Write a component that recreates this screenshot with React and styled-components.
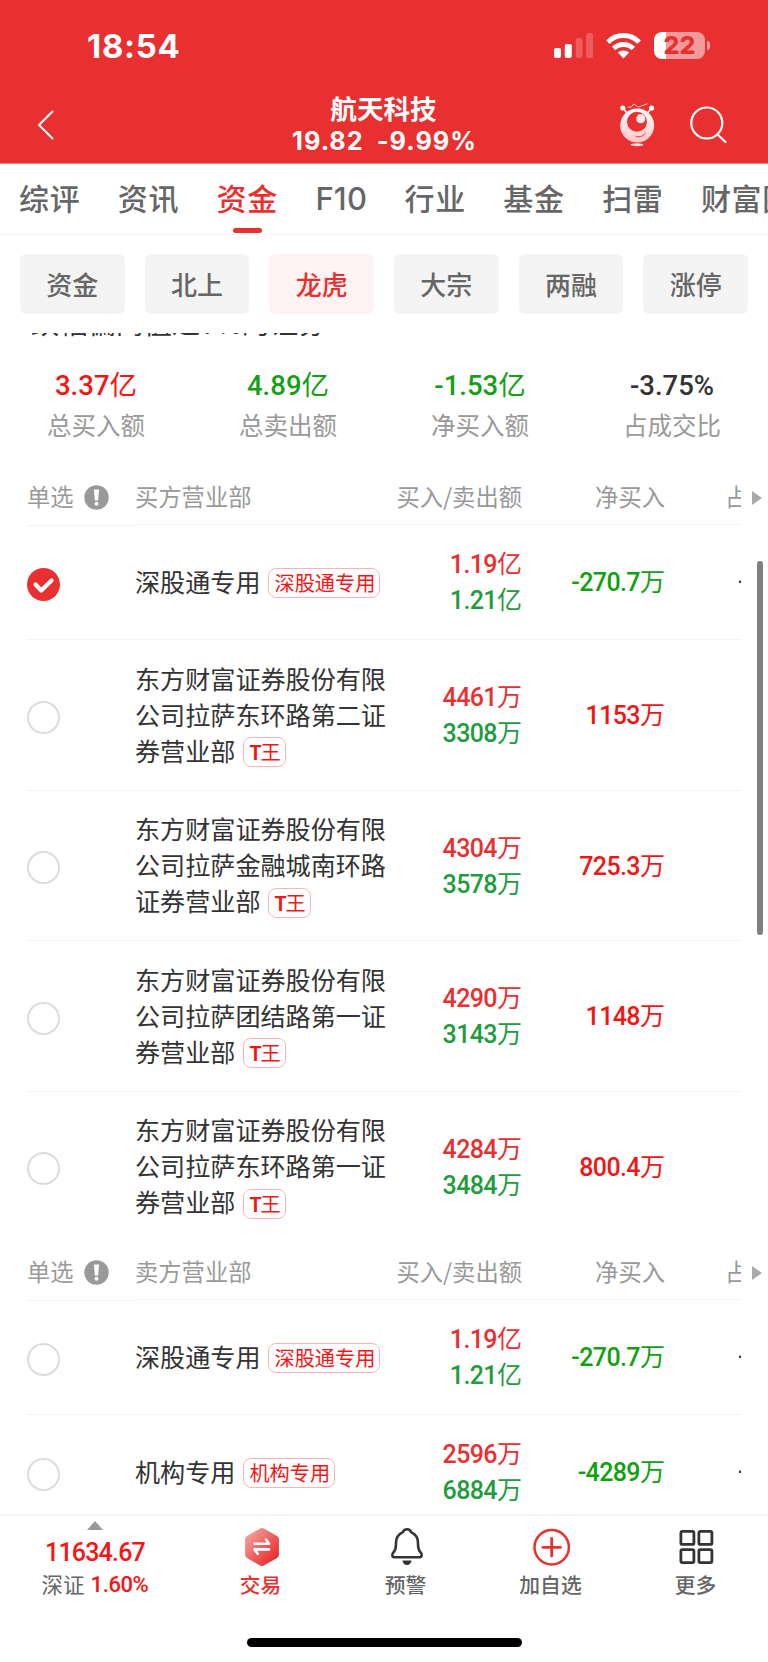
import React from "react";
import styled, { createGlobalStyle } from "styled-components";

const CJK = '"Noto Sans CJK SC", sans-serif';
const NUM = 'Roboto, "Noto Sans CJK SC", sans-serif';
const RED = "#e93030";

const GlobalStyle = createGlobalStyle`
  * { box-sizing: border-box; }
  body { margin: 0; background: #fff; font-family: ${CJK}; color: #333; }
`;

const Screen = styled.div`
  width: 768px;
  height: 1662px;
  display: flex;
  flex-direction: column;
  overflow: hidden;
  background: #fff;
`;

const Header = styled.header`
  flex: none;
  background: ${RED};
  color: #fff;
  border-bottom: 1px solid #f08080;
  height: 164px;
`;

const StatusBar = styled.div`
  height: 92px;
  padding: 0 58px 1px 87px;
  display: flex;
  align-items: center;
  justify-content: space-between;
`;

const Clock = styled.div`
  font: 700 33px/40px Inter, sans-serif;
  letter-spacing: 0.7px;
  padding-top: 1px;
`;

const StatusIcons = styled.div`
  display: flex;
  align-items: center;
  svg { display: block; }
`;

const Battery = styled.div`
  width: 51px;
  height: 27px;
  border-radius: 8px;
  margin-left: 13px;
  background: linear-gradient(to right, #fff 11.5px, #f59a9a 11.5px);
  color: ${RED};
  font: 800 25px/27px Inter, sans-serif;
  text-align: center;
`;

const BatteryTip = styled.div`
  width: 3px;
  height: 9px;
  margin-left: 2px;
  border-radius: 0 4px 4px 0;
  background: #f59a9a;
`;

const NavBar = styled.div`
  height: 64px;
  padding: 0 41px 0 37px;
  display: grid;
  grid-template-columns: 107px 1fr 107px;
  align-items: center;
  svg { display: block; }
`;

const Title = styled.div`
  text-align: center;
  font: 700 26.6px/32px ${CJK};
`;

const Quote = styled.div`
  text-align: center;
  font: 700 25.3px/32px Inter, sans-serif;
  letter-spacing: 1px;
  word-spacing: 6px;
  white-space: nowrap;
  padding: 1px 0 0 2px;
`;

const TitleBlock = styled.div`
  padding-left: 3px;
`;

const NavActions = styled.div`
  display: flex;
  justify-content: space-between;
  align-items: center;
`;

const Tabs = styled.nav`
  height: 71px;
  flex: none;
  display: flex;
  gap: 37.4px;
  padding-left: 19px;
  border-bottom: 1px solid #f4f4f4;
  overflow: hidden;
`;

const Tab = styled.div`
  flex: none;
  display: flex;
  flex-direction: column;
  align-items: center;
  justify-content: space-between;
  padding-top: ${(p) => (p.$latin ? 13 : 11)}px;
  font: ${(p) => (p.$latin ? "500 31px/44px Inter" : "500 30px/44px " + CJK)};
  letter-spacing: ${(p) => (p.$latin ? 0.2 : 0.7)}px;
  color: ${(p) => (p.$active ? RED : "#666")};
`;

const TabMark = styled.span`
  width: 29px;
  height: 5px;
  border-radius: 3px;
  margin-bottom: 1px;
  background: ${(p) => (p.$active ? RED : "transparent")};
`;

const Chips = styled.div`
  flex: none;
  height: 98px;
  padding: 19px 20px 19px;
  display: grid;
  grid-template-columns: repeat(6, 1fr);
  gap: 20px;
`;

const Chip = styled.div`
  height: 60px;
  border-radius: 6px;
  text-align: center;
  font: 500 26px/59px ${CJK};
  color: ${(p) => (p.$active ? RED : "#666")};
  background: ${(p) => (p.$active ? "#fff2f2" : "#f4f4f4")};
`;

const Scroll = styled.main`
  position: relative;
  flex: none;
  height: 1181px;
  overflow: hidden;
`;

const Reason = styled.p`
  margin: -31px 0 0;
  padding-left: 31px;
  height: 45px;
  font: 400 28.2px/40px ${CJK};
`;

const Stats = styled.div`
  display: grid;
  grid-template-columns: repeat(4, 192px);
  height: 120px;
  padding-top: 19px;
  text-align: center;
`;

const StatValue = styled.div`
  font: 500 27.5px/40px ${NUM};
  color: ${(p) => p.$color};
`;

const StatLabel = styled.div`
  font: 400 24.5px/36px ${CJK};
  margin-top: 1px;
  color: #999;
`;

const Unit = styled.span`
  font-weight: 400;
  letter-spacing: 0;
`;

const HeadRow = styled.div`
  position: relative;
  display: grid;
  grid-template-columns: 108px 251px 136px 143px 76px;
  width: 741px;
  padding-left: 27px;
  height: 58px;
  font: 400 23.3px/58px ${CJK};
  color: #999;
`;

const HeadCell = styled.div`
  display: flex;
  align-items: center;
  height: 58px;
  justify-content: ${(p) => (p.$end ? "flex-end" : "flex-start")};
  border-bottom: 1px solid #f3f3f3;
  white-space: nowrap;
  overflow: hidden;
  svg { flex: none; }
`;

const SelectHead = styled(HeadCell)`
  height: 59px;
  gap: 10px;
  padding-bottom: 1px;
`;

const LastHead = styled(HeadCell)`
  padding-left: 60px;
`;

const MoreArrow = styled.span`
  position: absolute;
  right: -21px;
  top: 24px;
  border: 7px solid transparent;
  border-left: 10px solid #aaa;
  border-right: 0;
`;

const Row = styled.div`
  display: grid;
  grid-template-columns: 108px 251px 136px 143px 76px;
  align-items: center;
  width: 714px;
  margin-left: 27px;
  height: ${(p) => p.$height}px;
  border-bottom: 1px solid ${(p) => (p.$last ? "transparent" : "#f3f3f3")};
  overflow: hidden;
`;

const Radio = styled.span`
  display: flex;
  align-items: center;
  justify-content: center;
  width: 33px;
  height: 33px;
  margin-top: 4px;
  border-radius: 50%;
  border: ${(p) => (p.$on ? "0" : "2px solid #dcdcdc")};
  background: ${(p) => (p.$on ? RED : "#fff")};
`;

const Name = styled.div`
  font: 400 25.1px/36px ${CJK};
  color: #333;
  white-space: nowrap;
  margin-bottom: 3px;
`;

const Line = styled.div`
  display: flex;
  align-items: center;
  height: 36px;
`;

const Tag = styled.span`
  height: 30px;
  margin-left: 8px;
  margin-top: 5px;
  padding: 0 4px 0 5px;
  border: 1px solid #ffb4b4;
  border-radius: 8px;
  font: 400 20.2px/27px ${CJK};
  color: #f71414;
`;

const TagLatin = styled.b`
  font: 700 19.5px/27px Roboto, sans-serif;
  letter-spacing: -1px;
`;

const Amounts = styled.div`
  text-align: right;
  font: 500 25px/36px ${NUM};
  letter-spacing: -0.6px;
  padding-top: 2px;
`;

const Amount = styled.div`
  color: ${(p) => (p.$buy ? RED : "#1f9c3d")};
`;

const Net = styled.div`
  text-align: right;
  font: 500 25px/36px ${NUM};
  letter-spacing: -0.6px;
  padding-top: 2px;
  color: ${(p) => (p.$down ? "#11a011" : "#f51414")};
`;

const Ratio = styled.div`
  padding-left: 73px;
  white-space: nowrap;
  font: 500 25px/36px ${NUM};
  color: #333;
`;

const ScrollThumb = styled.div`
  position: absolute;
  top: 228px;
  right: 5px;
  width: 6px;
  height: 374px;
  border-radius: 3px;
  background: #808080;
`;

const BottomBar = styled.footer`
  flex: none;
  height: 112px;
  display: grid;
  grid-template-columns: 188px repeat(4, 145px);
  border-top: 2px solid #f5f5f5;
`;

const IndexCell = styled.div`
  display: flex;
  flex-direction: column;
  align-items: center;
  padding: 5px 0 0 2px;
`;

const UpArrow = styled.span`
  border: 8px solid transparent;
  border-bottom: 9px solid #999;
  border-top: 0;
`;

const IndexValue = styled.div`
  font: 500 25px/32px ${NUM};
  letter-spacing: -0.8px;
  color: #f71414;
  margin-top: 7px;
`;

const IndexChange = styled.div`
  display: flex;
  align-items: center;
  gap: 6px;
  height: 32px;
  margin-top: -1px;
  font: 400 21.5px/32px ${CJK};
  color: #666;
  span { font: 500 22px/32px ${NUM}; letter-spacing: -0.4px; color: #f71414; padding-top: 1px; }
`;

const Action = styled.div`
  display: flex;
  flex-direction: column;
  align-items: center;
  padding-top: 11px;
  font: 500 20.8px/30px ${CJK};
  color: ${(p) => (p.$active ? RED : "#666")};
  svg { display: block; margin-bottom: 2px; }
`;

const HomeArea = styled.div`
  flex: none;
  height: 36px;
  padding-top: 12px;
`;

const HomeIndicator = styled.div`
  width: 275px;
  height: 9px;
  margin: 0 auto;
  border-radius: 5px;
  background: #000;
`;

const Signal = () => (
  <svg width="40" height="26" viewBox="0 0 40 26" fill="#fff">
    <rect x="0" y="15" width="7" height="10" rx="2" />
    <rect x="10.800" y="11" width="7" height="14" rx="2" />
    <rect x="21.800" y="5" width="6.600" height="20" rx="2" opacity=".22" />
    <rect x="32.200" y="0" width="6.800" height="25" rx="2" opacity=".22" />
  </svg>
);

const WifiIcon = styled.svg`
  margin-left: 12px;
`;

const Wifi = () => (
  <WifiIcon width="35" height="26" viewBox="0 0 35 26">
    <g fill="none" stroke="#fff" strokeWidth="5">
      <path d="M1.900 9.200C10.500 .4 24.500 .4 33.100 9.200" />
      <path d="M7.700 15.500C13.200 10.200 21.800 10.200 27.300 15.500" />
    </g>
    <path d="M17.500 25.500 11.800 19.600C15 16.700 20 16.700 23.200 19.600Z" fill="#fff" />
  </WifiIcon>
);

const Back = () => (
  <svg width="17" height="30" viewBox="0 0 17 30">
    <path d="M15.500 1.500 2 15 15.500 28.500" fill="none" stroke="#fff" strokeWidth="2" strokeLinecap="round" strokeLinejoin="round" />
  </svg>
);

const Mascot = () => (
  <svg width="36" height="44" viewBox="0 0 36 44">
    <defs>
      <linearGradient id="body" x1="0" y1="0" x2="0" y2="1">
        <stop offset="0" stopColor="#fff" />
        <stop offset="1" stopColor="#ffc4c4" />
      </linearGradient>
    </defs>
    <path d="m3 5 3.800 5M31.500 5l-3.800 5" stroke="#fff" strokeWidth="1.300" />
    <circle cx="2.900" cy="5" r="2.600" fill="#fff" />
    <circle cx="31.500" cy="5" r="2.600" fill="#fff" />
    <path d="M8 4.200 11.500 4 13.500 1l5 3 9-3.200" fill="none" stroke="#ffdada" strokeWidth=".9" />
    <circle cx="17.200" cy="22.500" r="17" fill="url(#body)" />
    <circle cx="17" cy="18.700" r="10" fill={RED} />
    <circle cx="20.800" cy="15.700" r="4.600" fill="#ffe9e9" />
    <path d="M16.200 33.500c4 1 7.500-.5 9-3.500" fill="none" stroke={RED} strokeWidth="1" strokeLinecap="round" />
    <ellipse cx="17" cy="41.700" rx="6.500" ry="1.500" fill="#ffdede" />
  </svg>
);

const Search = () => (
  <svg width="37" height="38" viewBox="0 0 37 38" fill="none" stroke="#fff" strokeWidth="2.200">
    <circle cx="16.800" cy="17" r="15.500" />
    <path d="m27.500 28.500 8 7.500" strokeLinecap="round" />
  </svg>
);

const InfoIcon = styled.svg`
  margin-top: 4px;
`;

const Info = () => (
  <InfoIcon width="25" height="25" viewBox="0 0 25 25">
    <circle cx="12.500" cy="12.500" r="12.200" fill="#999" />
    <path d="M9.900 4.500h5.200l-1 11h-3.200z" fill="#fff" />
    <circle cx="12.500" cy="18.800" r="2" fill="#fff" />
  </InfoIcon>
);

const Check = () => (
  <svg width="33" height="33" viewBox="0 0 33 33">
    <path d="m8.500 16.500 5.800 6L24.500 12.500" fill="none" stroke="#fff" strokeWidth="4.200" strokeLinecap="round" strokeLinejoin="round" />
  </svg>
);

const TradeIcon = () => (
  <svg width="40" height="40" viewBox="0 0 40 40">
    <defs>
      <linearGradient id="hex" x1="0" y1="0" x2="1" y2="1">
        <stop offset=".1" stopColor="#f5a09c" />
        <stop offset=".9" stopColor="#e72626" />
      </linearGradient>
    </defs>
    <path d="M18.700 1.700q2.300-1.300 4.600 0l12.700 7.300q1.900 1.100 1.900 3.200v15.600q0 2.100-1.900 3.200l-12.700 7.300q-2.300 1.300-4.600 0l-12.700-7.300q-1.900-1.100-1.900-3.200v-15.600q0-2.100 1.900-3.200z" fill="url(#hex)" />
    <path d="M13.500 16.800H28l-3-4.300M28 22.400H13.500l3.200 4.400" fill="none" stroke="#fff" strokeWidth="2.600" strokeLinecap="round" strokeLinejoin="round" />
  </svg>
);

const BellIcon = () => (
  <svg width="40" height="40" viewBox="0 0 40 40">
    <path d="M21 2.200c-2.400 0-3.700 1.500-4.100 2.900-4.500 2-6.900 6-6.900 10.900 0 5-.4 7.500-2.500 9.200-2.400 2-1.300 5.100 1.400 5.100h24.200c2.700 0 3.800-3.100 1.400-5.100C32.400 23.500 32 21 32 16c0-4.900-2.400-8.900-6.900-10.900-.4-1.400-1.700-2.900-4.100-2.900Z" fill="none" stroke="#333" strokeWidth="2.600" strokeLinejoin="round" />
    <path d="M16.500 33.500h9c-.5 3-2.200 4.500-4.500 4.500s-4-1.500-4.500-4.500Z" fill="#333" />
  </svg>
);

const AddIcon = () => (
  <svg width="40" height="40" viewBox="0 0 40 40" fill="none" stroke={RED}>
    <circle cx="20.700" cy="20.300" r="17.200" strokeWidth="2.500" />
    <path d="M20.700 11.500v17.600M11.900 20.300h17.600" strokeWidth="2.800" strokeLinecap="round" />
  </svg>
);

const MoreIcon = () => (
  <svg width="40" height="40" viewBox="0 0 40 40" fill="none" stroke="#333" strokeWidth="2.800">
    <rect x="4.900" y="4.400" width="13" height="13" rx="1.500" />
    <rect x="22.900" y="4.400" width="13" height="13" rx="1.500" />
    <rect x="4.900" y="22.600" width="13" height="13" rx="1.500" />
    <rect x="22.900" y="22.600" width="13" height="13" rx="1.500" />
  </svg>
);

const tabs = ["综评", "资讯", "资金", "F10", "行业", "基金", "扫雷", "财富圈"];
const chips = ["资金", "北上", "龙虎", "大宗", "两融", "涨停"];
const stats = [
  ["3.37亿", "总买入额", "#f71414"],
  ["4.89亿", "总卖出额", "#14a014"],
  ["-1.53亿", "净买入额", "#14a014"],
  ["-3.75%", "占成交比", "#333"],
];
const buyers = [
  { lines: ["深股通专用"], tag: "深股通专用", buy: "1.19亿", sell: "1.21亿", net: "-270.7万", ratio: "-0.07%", on: true, h: 115 },
  { lines: ["东方财富证券股份有限", "公司拉萨东环路第二证", "券营业部"], tag: "T王", buy: "4461万", sell: "3308万", net: "1153万", h: 151 },
  { lines: ["东方财富证券股份有限", "公司拉萨金融城南环路", "证券营业部"], tag: "T王", buy: "4304万", sell: "3578万", net: "725.3万", h: 150 },
  { lines: ["东方财富证券股份有限", "公司拉萨团结路第一证", "券营业部"], tag: "T王", buy: "4290万", sell: "3143万", net: "1148万", h: 151 },
  { lines: ["东方财富证券股份有限", "公司拉萨东环路第一证", "券营业部"], tag: "T王", buy: "4284万", sell: "3484万", net: "800.4万", h: 150, last: true },
];
const sellers = [
  { lines: ["深股通专用"], tag: "深股通专用", buy: "1.19亿", sell: "1.21亿", net: "-270.7万", ratio: "-0.07%", h: 115 },
  { lines: ["机构专用"], tag: "机构专用", buy: "2596万", sell: "6884万", net: "-4289万", ratio: "-1.06%", h: 115 },
];

const Figure = ({ value }) => {
  const [, digits, unit] = value.match(/^([-\d.%]+)(.*)$/);
  return <>{digits}<Unit>{unit}</Unit></>;
};

const TableHead = ({ side }) => (
  <HeadRow>
    <SelectHead>单选<Info /></SelectHead>
    <HeadCell>{side}</HeadCell>
    <HeadCell $end>买入/卖出额</HeadCell>
    <HeadCell $end>净买入</HeadCell>
    <LastHead>占</LastHead>
    <MoreArrow />
  </HeadRow>
);

const BrokerRow = ({ item }) => (
  <Row $height={item.h} $last={item.last}>
    <Radio $on={item.on}>{item.on && <Check />}</Radio>
    <Name>
      {item.lines.map((text, i) => (
        <Line key={text}>
          {text}
          {i === item.lines.length - 1 && (
            <Tag>{item.tag === "T王" ? <><TagLatin>T</TagLatin>王</> : item.tag}</Tag>
          )}
        </Line>
      ))}
    </Name>
    <Amounts>
      <Amount $buy><Figure value={item.buy} /></Amount>
      <Amount><Figure value={item.sell} /></Amount>
    </Amounts>
    <Net $down={item.net.startsWith("-")}><Figure value={item.net} /></Net>
    <Ratio>{item.ratio}</Ratio>
  </Row>
);

export default function App() {
  return (
    <Screen>
      <GlobalStyle />
      <Header>
        <StatusBar>
          <Clock>18:54</Clock>
          <StatusIcons>
            <Signal />
            <Wifi />
            <Battery>22</Battery>
            <BatteryTip />
          </StatusIcons>
        </StatusBar>
        <NavBar>
          <Back />
          <TitleBlock>
            <Title>航天科技</Title>
            <Quote>19.82 -9.99%</Quote>
          </TitleBlock>
          <NavActions>
            <Mascot />
            <Search />
          </NavActions>
        </NavBar>
      </Header>
      <Tabs>
        {tabs.map((t) => (
          <Tab key={t} $active={t === "资金"} $latin={t === "F10"}>
            {t}
            <TabMark $active={t === "资金"} />
          </Tab>
        ))}
      </Tabs>
      <Chips>
        {chips.map((c) => (
          <Chip key={c} $active={c === "龙虎"}>{c}</Chip>
        ))}
      </Chips>
      <Scroll>
        <Reason>跌幅偏离值达7%的证券</Reason>
        <Stats>
          {stats.map(([value, label, color]) => (
            <div key={label}>
              <StatValue $color={color}><Figure value={value} /></StatValue>
              <StatLabel>{label}</StatLabel>
            </div>
          ))}
        </Stats>
        <TableHead side="买方营业部" />
        {buyers.map((b) => <BrokerRow key={b.lines.join("")} item={b} />)}
        <TableHead side="卖方营业部" />
        {sellers.map((s) => <BrokerRow key={s.lines.join("")} item={s} />)}
        <ScrollThumb />
      </Scroll>
      <BottomBar>
        <IndexCell>
          <UpArrow />
          <IndexValue>11634.67</IndexValue>
          <IndexChange>深证<span>1.60%</span></IndexChange>
        </IndexCell>
        <Action $active><TradeIcon />交易</Action>
        <Action><BellIcon />预警</Action>
        <Action><AddIcon />加自选</Action>
        <Action><MoreIcon />更多</Action>
      </BottomBar>
      <HomeArea><HomeIndicator /></HomeArea>
    </Screen>
  );
}
